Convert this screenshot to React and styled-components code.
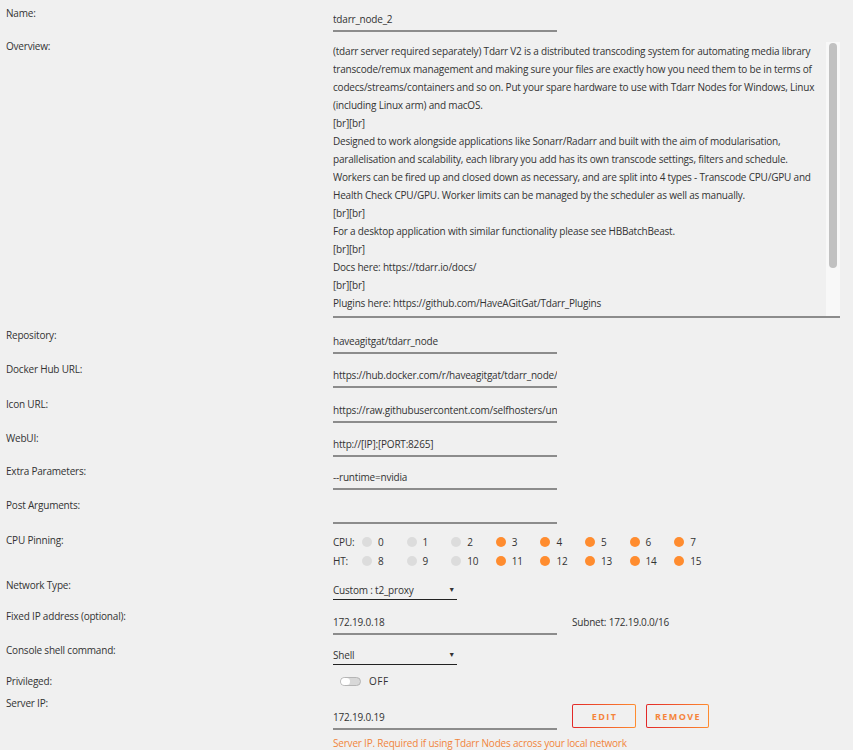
import React from 'react';
import styled, {createGlobalStyle} from 'styled-components';

const GlobalStyle = createGlobalStyle`
body {
  margin: 0;
  background: #f0f0f0;
  color: #333;
  font-family: "Open Sans", "Noto Sans", sans-serif;
  font-size: 10px;
  letter-spacing: -0.2px;
}
`

const Form = styled.div`
display: flex;
flex-direction: column;
padding-left: 6px;
`
const Row = styled.div`
display: grid;
grid-template-columns: 327px 1fr;
align-items: start;
min-height: ${p => p.$h}px;
`
const Label = styled.div`
padding-top: 4px;
line-height: 18px;
`
const Field = styled.div`
display: flex;
align-items: flex-start;
gap: 15px;
margin-top: ${p => p.$top ?? 7}px;
`
const Stack = styled.div`
display: flex;
flex-direction: column;
`
const TextInput = styled.input`
box-sizing: content-box;
width: 224px;
height: 23px;
padding: 0;
border: none;
border-bottom: 2px solid #8c8c8c;
background: transparent;
color: #333;
font: inherit;
letter-spacing: inherit;
outline: none;
`
const OverviewBox = styled.div`
box-sizing: border-box;
display: flex;
width: 507px;
height: 276px;
border-bottom: 2px solid #8c8c8c;
`
const Overview = styled.textarea`
flex: 1;
padding: 0;
margin: 0;
border: none;
background: transparent;
color: #333;
font: inherit;
letter-spacing: inherit;
line-height: 18px;
resize: none;
outline: none;
overflow: hidden;
`
const ScrollTrack = styled.div`
box-sizing: border-box;
width: 14px;
padding: 1px 3px;
background: #f8f8f8;
`
const ScrollThumb = styled.div`
height: 225px;
border-radius: 4px;
background: #c1c1c1;
`
const Note = styled.div`
line-height: 18px;
padding-top: ${p => p.$pad ?? 0}px;
color: ${p => p.$accent ? '#f0853c' : '#333'};
`
const Pins = styled.div`
display: flex;
flex-direction: column;
margin-top: 5px;
`
const PinLine = styled.div`
display: flex;
align-items: center;
height: 19px;
`
const PinTag = styled.span`
width: 29px;
`
const Pin = styled.span`
display: flex;
align-items: center;
gap: 6px;
width: 44.6px;

&::before {
  content: '';
  width: 10px;
  height: 10px;
  border-radius: 50%;
  background: ${p => p.$on ? '#ff8c2f' : '#dcdcdc'};
}
`
const Select = styled.div`
box-sizing: border-box;
display: flex;
justify-content: space-between;
align-items: center;
width: 124px;
height: 20px;
padding-right: 2px;
border-bottom: 1px solid #222;
line-height: 18px;
`
const Caret = styled.span`
font-size: 7px;
color: #333;
`
const Switch = styled.span`
box-sizing: border-box;
position: relative;
width: 21px;
height: 9px;
margin-left: 7px;
border: 1px solid #b5b5b5;
border-radius: 5px;
background: #d8d8d8;

&::after {
  content: '';
  position: absolute;
  left: 0;
  top: 0;
  width: 9px;
  height: 7px;
  border-radius: 4px;
  background: #fff;
}
`
const SwitchRow = styled.div`
display: flex;
align-items: center;
gap: 8px;
margin-top: 8px;
line-height: 10px;
letter-spacing: 0.5px;
`
const Actions = styled.div`
display: flex;
gap: 10px;
margin-top: -1px;
`
const Button = styled.button`
box-sizing: border-box;
width: ${p => p.$w}px;
height: 24px;
padding: 0 0 0 1px;
border: 1px solid transparent;
border-radius: 2px;
background: linear-gradient(#f0f0f0, #f0f0f0) padding-box,
  linear-gradient(90deg, #e22828, #ff8c2f) border-box;
color: #f5843a;
font-family: inherit;
font-size: 9px;
font-weight: 700;
letter-spacing: 1.4px;
text-transform: uppercase;
`

const overview = `(tdarr server required separately) Tdarr V2 is a distributed transcoding system for automating media library transcode/remux management and making sure your files are exactly how you need them to be in terms of codecs/streams/containers and so on. Put your spare hardware to use with Tdarr Nodes for Windows, Linux (including Linux arm) and macOS.
[br][br]
Designed to work alongside applications like Sonarr/Radarr and built with the aim of modularisation, parallelisation and scalability, each library you add has its own transcode settings, filters and schedule. Workers can be fired up and closed down as necessary, and are split into 4 types - Transcode CPU/GPU and Health Check CPU/GPU. Worker limits can be managed by the scheduler as well as manually.
[br][br]
For a desktop application with similar functionality please see HBBatchBeast.
[br][br]
Docs here: https://tdarr.io/docs/
[br][br]
Plugins here: https://github.com/HaveAGitGat/Tdarr_Plugins
[br][br]
Discord: https://discord.gg/GF8X8cq
[br][br]`

const pinned = [3, 4, 5, 6, 7, 11, 12, 13, 14, 15];

function PinRow({tag, from}) {
    return (
        <PinLine>
            <PinTag>{tag}</PinTag>
            {Array.from({length: 8}, (_, i) => from + i).map(n => (
                <Pin key={n} $on={pinned.includes(n)}>{n}</Pin>
            ))}
        </PinLine>
    )
}

function InputRow({label, value, h = 34}) {
    return (
        <Row $h={h}>
            <Label>{label}</Label>
            <Field>
                <TextInput readOnly value={value}/>
            </Field>
        </Row>
    )
}

export default function App() {
    return (
        <>
            <GlobalStyle/>
            <Form>
                <InputRow label="Name:" value="tdarr_node_2" h={33}/>
                <Row $h={289}>
                    <Label>Overview:</Label>
                    <Field $top={9}>
                        <OverviewBox>
                            <Overview readOnly value={overview}/>
                            <ScrollTrack><ScrollThumb/></ScrollTrack>
                        </OverviewBox>
                    </Field>
                </Row>
                <InputRow label="Repository:" value="haveagitgat/tdarr_node"/>
                <InputRow label="Docker Hub URL:" value="https://hub.docker.com/r/haveagitgat/tdarr_node/" h={35}/>
                <InputRow label="Icon URL:" value="https://raw.githubusercontent.com/selfhosters/unRAID-CA-templates/master/templates/img/tdarr.png"/>
                <InputRow label="WebUI:" value="http://[IP]:[PORT:8265]" h={33}/>
                <InputRow label="Extra Parameters:" value="--runtime=nvidia"/>
                <InputRow label="Post Arguments:" value="" h={35}/>
                <Row $h={45}>
                    <Label>CPU Pinning:</Label>
                    <Pins>
                        <PinRow tag="CPU:" from={0}/>
                        <PinRow tag="HT:" from={8}/>
                    </Pins>
                </Row>
                <Row $h={31}>
                    <Label>Network Type:</Label>
                    <Field $top={8}>
                        <Select>Custom : t2_proxy<Caret>▼</Caret></Select>
                    </Field>
                </Row>
                <Row $h={34}>
                    <Label>Fixed IP address (optional):</Label>
                    <Field>
                        <TextInput readOnly value="172.19.0.18"/>
                        <Note $pad={3}>Subnet: 172.19.0.0/16</Note>
                    </Field>
                </Row>
                <Row $h={31}>
                    <Label>Console shell command:</Label>
                    <Field $top={8}>
                        <Select>Shell<Caret>▼</Caret></Select>
                    </Field>
                </Row>
                <Row $h={22}>
                    <Label>Privileged:</Label>
                    <SwitchRow>
                        <Switch/>
                        <span>OFF</span>
                    </SwitchRow>
                </Row>
                <Row $h={60}>
                    <Label>Server IP:</Label>
                    <Stack>
                        <Field $top={15}>
                            <TextInput readOnly value="172.19.0.19"/>
                            <Actions>
                                <Button $w={64}>Edit</Button>
                                <Button $w={63}>Remove</Button>
                            </Actions>
                        </Field>
                        <Note $pad={4} $accent>Server IP. Required if using Tdarr Nodes across your local network</Note>
                    </Stack>
                </Row>
            </Form>
        </>
    )
}
